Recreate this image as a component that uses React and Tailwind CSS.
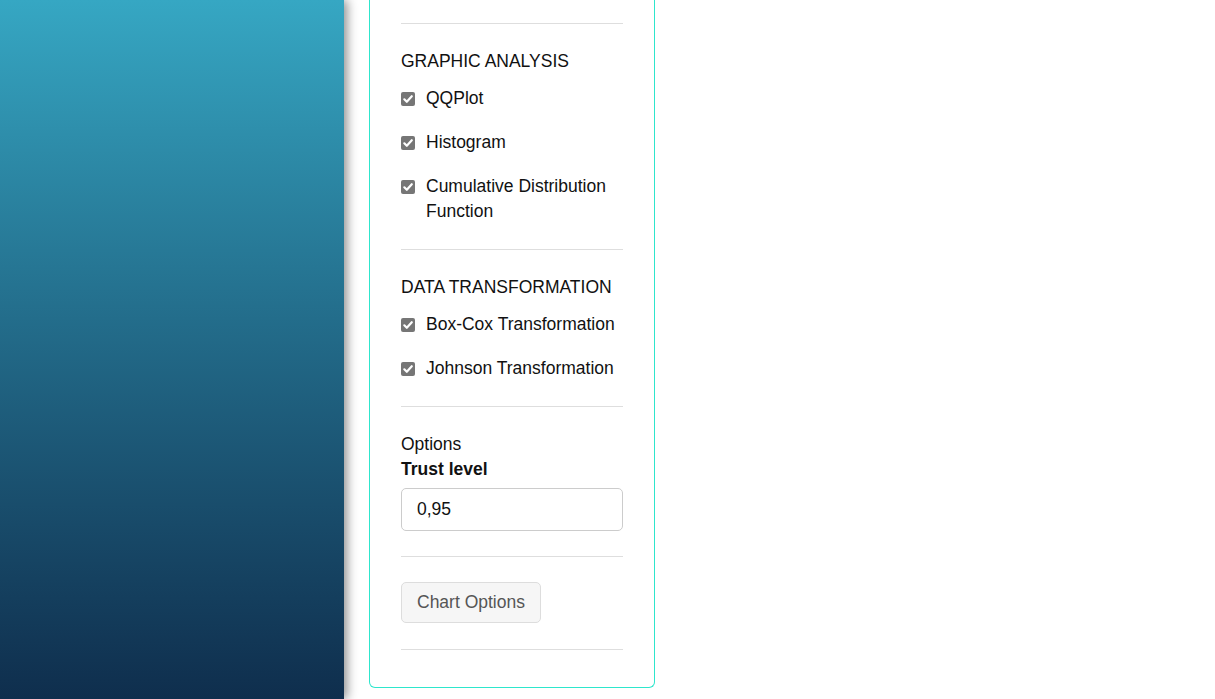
import React from 'react'

function Check({ label }) {
  return (
    <label className="flex items-start">
      <span className="mt-[5.5px] flex h-[14px] w-[14px] shrink-0 items-center justify-center rounded-[2px] bg-[#767676]">
        <svg viewBox="0 0 12 12" className="h-[12px] w-[12px]" fill="none">
          <path d="M2.3 6.3 4.8 8.8 9.8 3.2" stroke="white" strokeWidth="2.2" strokeLinecap="round" strokeLinejoin="round" />
        </svg>
      </span>
      <span className="ml-[11px]">{label}</span>
    </label>
  )
}

function Rule() {
  return <div className="h-px bg-[#dedede]" />
}

export default function App() {
  return (
    <div
      className="flex min-h-screen bg-white text-[17.5px] leading-[25px] text-[#111]"
      style={{ fontFamily: '"Liberation Sans", Arial, sans-serif' }}
    >
      <aside className="h-[699px] w-[344px] shrink-0 bg-gradient-to-b from-[#36a7c3] to-[#0f2e4d] shadow-[3px_0_10px_rgba(0,0,0,0.45)]" />

      <div className="ml-[25px] w-[286px] self-start rounded-b-[6px] border-x border-b border-[#2ee6cc] px-[31px] pt-[23px] pb-[37px]">
        <Rule />

        <section className="pt-[25px] pb-[25px]">
          <h3 className="mb-[12px]">GRAPHIC ANALYSIS</h3>
          <div className="flex flex-col gap-[19px]">
            <Check label="QQPlot" />
            <Check label="Histogram" />
            <Check label="Cumulative Distribution Function" />
          </div>
        </section>

        <Rule />

        <section className="pt-[25px] pb-[25px]">
          <h3 className="mb-[12px]">DATA TRANSFORMATION</h3>
          <div className="flex flex-col gap-[19px]">
            <Check label="Box-Cox Transformation" />
            <Check label="Johnson Transformation" />
          </div>
        </section>

        <Rule />

        <section className="pt-[24.5px] pb-[25px]">
          <div>Options</div>
          <div className="font-bold">Trust level</div>
          <input
            defaultValue="0,95"
            className="mt-[6px] block h-[43px] w-full rounded-[5px] border border-[#cccccc] px-[15px] text-[17.5px] text-[#111] outline-none"
            style={{ fontFamily: '"Liberation Sans", Arial, sans-serif' }}
          />
        </section>

        <Rule />

        <section className="pt-[25px] pb-[26px]">
          <button
            className="h-[41px] rounded-[5px] border border-[#dddddd] bg-[#f6f6f6] px-[15px] text-[17.5px] text-[#555]"
            style={{ fontFamily: '"Liberation Sans", Arial, sans-serif' }}
          >
            Chart Options
          </button>
        </section>

        <Rule />
      </div>
    </div>
  )
}
